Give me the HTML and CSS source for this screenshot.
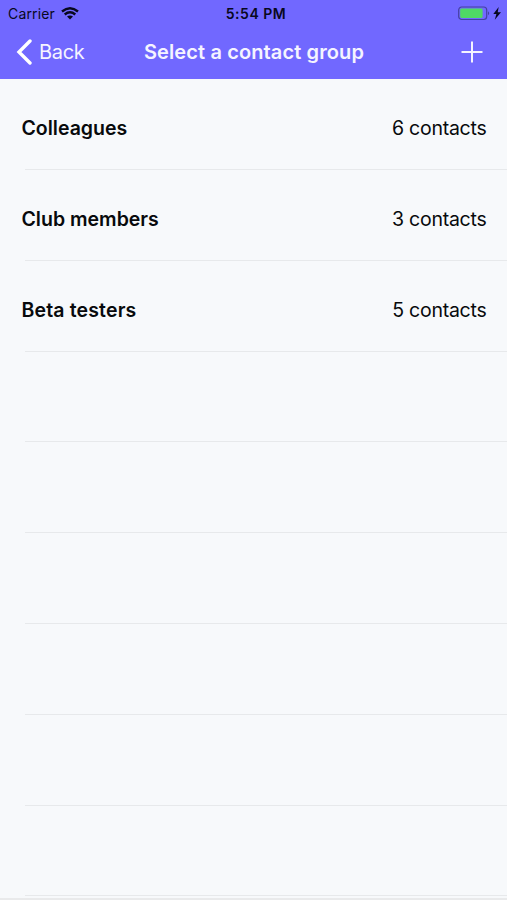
FILE: index.html
```html
<!DOCTYPE html>
<html lang="en">
<head>
<meta charset="utf-8">
<title>Select a contact group</title>
<link rel="stylesheet" href="styles.css">
</head>
<body>
<header class="header">
  <div class="status">
    <div class="carrier"><span class="carrier-name">Carrier</span>
      <svg class="wifi" viewBox="0 0 18 13" width="18" height="13"><path d="M1 4.500Q9-2 17 4.500M3.700 7.500Q9 3.200 14.300 7.500" fill="none" stroke="currentColor" stroke-width="2.400"/><path d="M6 9.600Q9 7.200 12 9.600L9 12.500Z" fill="currentColor"/></svg>
    </div>
    <time class="clock">5:54 PM</time>
    <div class="power">
      <svg viewBox="0 0 44 15" width="44" height="15"><rect x=".7" y="1" width="28" height="12.5" rx="3" fill="none" stroke="#4540a0" stroke-width="1.2"/><rect x="2.200" y="2.500" width="22.400" height="9.500" rx="1.400" fill="#4fd964"/><path d="M30 5.200q2.400 2 0 4z" fill="#4540a0"/><path d="M40.700 1L35.300 8h3.100l-1.600 5.800L43 6.200h-3.300z" fill="currentColor"/></svg>
    </div>
  </div>
  <nav class="nav">
    <a class="back"><svg viewBox="0 0 16 26" width="16" height="26"><path d="M14 2L3 13L14 24" fill="none" stroke="currentColor" stroke-width="3.400" stroke-linecap="round"/></svg><span class="back-label">Back</span></a>
    <h1 class="title">Select a contact group</h1>
    <a class="add"><svg viewBox="0 0 22 22" width="22" height="22"><path d="M11 .5V21.500M.5 11H21.500" fill="none" stroke="currentColor" stroke-width="2"/></svg></a>
  </nav>
</header>
<main class="list">
  <div class="row"><span class="name">Colleagues</span><span class="count">6 contacts</span></div>
  <div class="row"><span class="name">Club members</span><span class="count">3 contacts</span></div>
  <div class="row"><span class="name wide">Beta testers</span><span class="count">5 contacts</span></div>
  <div class="row"></div>
  <div class="row"></div>
  <div class="row"></div>
  <div class="row"></div>
  <div class="row"></div>
  <div class="row"></div>
</main>
<footer class="edge"></footer>
</body>
</html>
```
FILE: styles.css
```css
* { box-sizing: border-box; }
body {
  margin: 0;
  height: 900px;
  display: flex;
  flex-direction: column;
  overflow: hidden;
  background: #f7f9fb;
  color: #080a0c;
  font-family: Inter, "Liberation Sans", sans-serif;
}
svg { display: block; flex: none; }
.header {
  flex: none;
  height: 79px;
  background: #7168ff;
}
.status {
  height: 27px;
  display: grid;
  grid-template-columns: 1fr auto 1fr;
  align-items: center;
  padding: 0 5px 0 8px;
  color: #080820;
  font-size: 14px;
  line-height: 27px;
}
.carrier { display: flex; align-items: center; gap: 6.500px; letter-spacing: .15px; }
.clock { margin-left: 2px; font-weight: 600; letter-spacing: .5px; }
.power { justify-self: end; }
.nav {
  height: 50px;
  display: grid;
  grid-template-columns: 1fr auto 1fr;
  align-items: center;
  padding: 0 16px;
  color: #f5f4ff;
}
.back { display: flex; align-items: center; gap: 7px; }
.back svg { color: #fff; }
.back-label { font-size: 20px; letter-spacing: -.3px; }
.title { margin: 0 0 0 1px; font-size: 20px; font-weight: 600; letter-spacing: .12px; }
.add { justify-self: end; margin-right: 8px; }
.list { flex: none; padding-top: .3px; }
.row {
  height: 90.8px;
  margin-left: 25px;
  padding: 8px 20.5px 0 0;
  display: flex;
  align-items: center;
  justify-content: space-between;
  border-bottom: 1px solid #e7e9eb;
  font-size: 19.5px;
}
.name { margin-left: -3.5px; font-weight: 600; }
.wide { letter-spacing: .15px; }
.count { letter-spacing: -.25px; }
.edge { margin-top: auto; height: 2px; background: #e9eaeb; }
```
